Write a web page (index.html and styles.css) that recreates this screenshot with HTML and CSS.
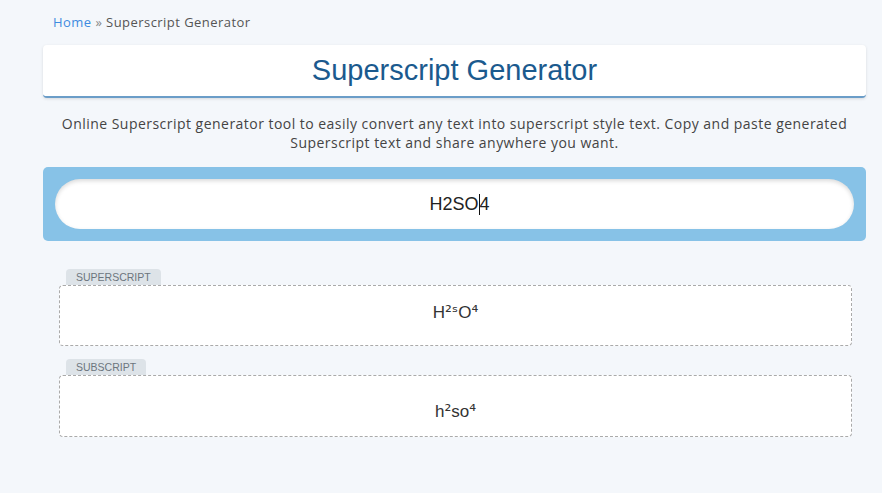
FILE: index.html
```html
<!DOCTYPE html>
<html lang="en">
<head>
 <meta charset="UTF-8">
 <meta name="viewport" content="width=device-width, initial-scale=1.0">
 <title>Superscript Generator</title>
 <link rel="stylesheet" href="styles.css">
</head>
<body>
 <div class="page">
   <div class="breadcrumb"><a href="#">Home</a> <span class="sep">»</span> Superscript Generator</div>
   <div class="titleCard">
     <h1 class="title">Superscript Generator</h1>
   </div>
   <p class="intro">Online Superscript generator tool to easily convert any text into superscript style text. Copy and paste generated Superscript text and share anywhere you want.</p>
   <div class="inputPanel">
     <div class="inputField">H2SO<span class="caret"></span>4</div>
   </div>
   <div class="results">
     <div class="result">
       <div class="label">Superscript</div>
       <div class="output outputSup">H<span class="mark">²ˢ</span>O<span class="mark">⁴</span></div>
     </div>
     <div class="result">
       <div class="label">Subscript</div>
       <div class="output outputSub">h<span class="mark">²</span>so<span class="mark">⁴</span></div>
     </div>
   </div>
 </div>
</body>
</html>
```

FILE: styles.css
```css
body {
  margin: 0;
  background-color: #f4f7fb;
  font-family: "Open Sans", sans-serif;
  color: #444;
}
.page {
  padding: 13px 16px 40px 43px;
}
.breadcrumb {
  padding-left: 10px;
  font-size: 13px;
  color: #555;
  letter-spacing: 0.45px;
}
.breadcrumb a {
  color: #3d8be0;
  text-decoration: none;
}
.sep {
  color: #888;
}
.titleCard {
  margin-top: 14px;
  background-color: #fff;
  border-radius: 4px;
  border-bottom: 2px solid #6b9dc8;
  box-shadow: 0 1px 3px rgba(0, 0, 0, 0.12);
  text-align: center;
}
.title {
  margin: 0;
  padding: 9px 0 10px;
  font-family: "Liberation Sans", Arial, sans-serif;
  font-weight: normal;
  font-size: 29px;
  line-height: 32px;
  color: #1b5a8e;
}
.intro {
  margin: 16px 0 15px;
  font-size: 14px;
  line-height: 19px;
  text-align: center;
  color: #444;
  letter-spacing: 0.47px;
}
.inputPanel {
  background-color: #87c2e7;
  border-radius: 5px;
  padding: 12px;
}
.inputField {
  height: 50px;
  padding-left: 10px;
  border-radius: 25px;
  background-color: #fff;
  box-shadow: inset 0 2px 4px rgba(0, 0, 0, 0.15);
  display: flex;
  justify-content: center;
  align-items: center;
  font-family: "Liberation Sans", Arial, sans-serif;
  font-size: 18px;
  color: #222;
}
.caret {
  display: inline-block;
  width: 1px;
  height: 21px;
  background-color: #111;
}
.results {
  padding: 28px 14px 0 16px;
  display: flex;
  flex-direction: column;
  gap: 13px;
}
.label {
  width: fit-content;
  margin-left: 7px;
  padding: 0 10px;
  height: 16px;
  line-height: 17px;
  background-color: #dde3e8;
  border-radius: 4px 4px 0 0;
  font-family: "Liberation Sans", Arial, sans-serif;
  font-size: 10.5px;
  text-transform: uppercase;
  color: #6c757d;
}
.output {
  background-color: #fff;
  border: 1px dashed #aaa;
  border-radius: 4px;
  text-align: center;
  font-family: "Liberation Sans", Arial, sans-serif;
  font-size: 17px;
  color: #333;
  box-sizing: border-box;
}
.mark {
  font-family: "DejaVu Sans", sans-serif;
  font-size: 17px;
}
.outputSup {
  height: 61px;
  padding-top: 16px;
}
.outputSub {
  height: 62px;
  padding-top: 25px;
}
```
